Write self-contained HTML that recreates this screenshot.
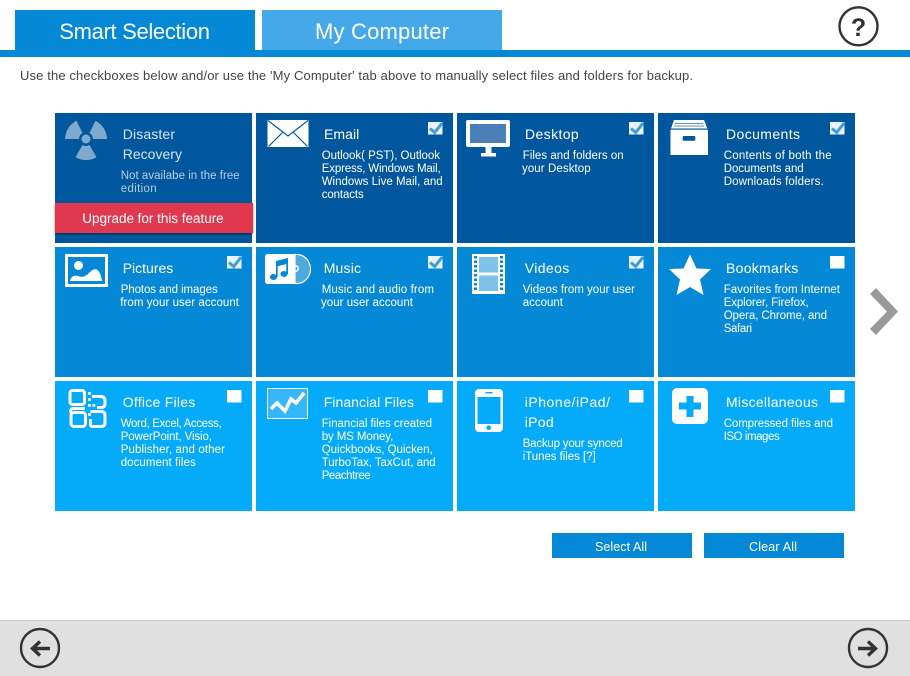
<!DOCTYPE html>
<html><head><meta charset="utf-8"><title>Smart Selection</title>
<style>
html,body{margin:0;padding:0;background:#fff;width:910px;height:676px;overflow:hidden}
svg{display:block}
text{font-family:"Liberation Sans",sans-serif;fill:#fff}
.t{font-size:14px}
.d{font-size:11.5px}
.b{font-size:12.5px}
</style></head><body>
<svg xmlns="http://www.w3.org/2000/svg" width="910" height="676" viewBox="0 0 910 676">
<defs>
<filter id="sh" x="-5%" y="-20%" width="110%" height="140%"><feDropShadow dx="0" dy="1" stdDeviation="1" flood-color="#000" flood-opacity=".55"/></filter>
<g id="box"><rect width="14.5" height="12.5" fill="#fff"/></g>
<g id="chk"><rect width="14.5" height="12.5" fill="#eaf2f8"/><path d="M2 6.5L6.7 10.5L14.2 1" fill="none" stroke="#3a9fd8" stroke-width="3"/></g>
</defs>
<!-- tabs -->
<rect x="15" y="10" width="240" height="40" fill="#0589d6"/>
<rect x="262" y="10" width="240" height="40" fill="#45a9e9"/>
<rect x="0" y="50" width="910" height="7" fill="#0589d6"/>
<text x="59.3" y="39" font-size="22" textLength="150.7">Smart Selection</text>
<text x="315" y="39" font-size="22" textLength="134">My Computer</text>
<circle cx="858.5" cy="26.3" r="19" fill="none" stroke="#333" stroke-width="2.4"/>
<text x="858.5" y="36" font-size="25" font-weight="bold" text-anchor="middle" style="fill:#333">?</text>
<text x="20" y="80" font-size="13" textLength="673" style="fill:#444">Use the checkboxes below and/or use the 'My Computer' tab above to manually select files and folders for backup.</text>

<!-- tiles -->
<g fill="#00579d"><rect x="55" y="113" width="197" height="130"/><rect x="256" y="113" width="197" height="130"/><rect x="457" y="113" width="197" height="130"/><rect x="658" y="113" width="197" height="130"/></g>
<g fill="#0589d6"><rect x="55" y="247" width="197" height="130"/><rect x="256" y="247" width="197" height="130"/><rect x="457" y="247" width="197" height="130"/><rect x="658" y="247" width="197" height="130"/></g>
<g fill="#05aaf8"><rect x="55" y="381" width="197" height="130"/><rect x="256" y="381" width="197" height="130"/><rect x="457" y="381" width="197" height="130"/><rect x="658" y="381" width="197" height="130"/></g>

<!-- Disaster -->
<g transform="translate(86 139)" fill="#7fa9cd">
<circle r="4.5"/>
<path d="M-10.5 18.2A21 21 0 0 0 10.5 18.2L3.5 6.06A7 7 0 0 1-3.5 6.06Z"/>
<path d="M9.5-18.2A21 21 0 0 1 21 0L7 0A7 7 0 0 0 3.5-6.06Z"/>
<path d="M-21 0A21 21 0 0 1-9.5-18.2L-3.5-6.06A7 7 0 0 0-7 0Z"/>
</g>
<text x="122.7" y="139" class="t" textLength="52.3" style="fill:#d5e3ef">Disaster</text>
<text x="122.7" y="159" class="t" textLength="59.3" style="fill:#d5e3ef">Recovery</text>
<text x="120.7" y="179" class="d" textLength="119" style="fill:#b5cde3">Not availabe in the free</text>
<text x="120.7" y="192" class="d" textLength="36" style="fill:#b5cde3">edition</text>
<rect x="55" y="203" width="198" height="30" fill="#e0384f" filter="url(#sh)"/>
<text x="82.3" y="223" font-size="13.5" textLength="141.4">Upgrade for this feature</text>

<!-- Email -->
<rect x="267.5" y="120" width="41" height="27" fill="#fff"/>
<path d="M268 120.5L288 136L308 120.5M268.5 146.5L283 132M307.5 146.5L293 132" fill="none" stroke="#00579d" stroke-width="1.2"/>
<text x="324" y="139" class="t" textLength="35.3">Email</text>
<text x="321.7" y="159" class="d" textLength="118.3">Outlook( PST), Outlook</text>
<text x="321.7" y="172" class="d" textLength="119">Express, Windows Mail,</text>
<text x="321.7" y="185" class="d" textLength="121">Windows Live Mail, and</text>
<text x="321.7" y="198" class="d" textLength="42">contacts</text>
<use href="#chk" x="428" y="122"/>

<!-- Desktop -->
<rect x="466" y="120" width="44" height="27" rx="2" fill="#fff"/>
<rect x="470" y="124" width="36" height="19" fill="#4a80b6"/>
<path d="M485.5 147h6v6h-6zM481 153h15v3.500h-15z" fill="#fff"/>
<text x="525" y="139" class="t" textLength="53.7">Desktop</text>
<text x="522.7" y="159" class="d" textLength="101">Files and folders on</text>
<text x="522" y="172" class="d" textLength="68.7">your Desktop</text>
<use href="#chk" x="629" y="122"/>

<!-- Documents -->
<path d="M674 120H704L708 130V155H670.500V130Z" fill="#fff"/>
<path d="M675 123.500H703M674 126H704" stroke="#5f93bf" stroke-width="1" fill="none"/>
<rect x="670" y="128.500" width="38" height="1.200" fill="#00579d"/>
<rect x="682.700" y="136" width="12.600" height="4.700" rx="1" fill="#00579d"/>
<text x="726" y="139" class="t" textLength="74">Documents</text>
<text x="723.7" y="159" class="d" textLength="108">Contents of both the</text>
<text x="723.7" y="172" class="d" textLength="80">Documents and</text>
<text x="723.7" y="185" class="d" textLength="100">Downloads folders.</text>
<use href="#chk" x="830" y="122"/>

<!-- Pictures -->
<rect x="65" y="254" width="43" height="33" rx="1" fill="#fff"/>
<rect x="68" y="257" width="37" height="27" fill="#0589d6"/>
<circle cx="78.500" cy="265.500" r="4.500" fill="#fff"/>
<path d="M70 281C71 276 75 275 78 276C83 278 86 276 90 272C95 267 100 268 102 281Z" fill="#fff"/>
<text x="122.7" y="273" class="t" textLength="50.6">Pictures</text>
<text x="120.7" y="293" class="d" textLength="97">Photos and images</text>
<text x="120.3" y="306" class="d" textLength="118.7">from your user account</text>
<use href="#chk" x="227" y="256"/>

<!-- Music -->
<path d="M295 254.500H297C305 254.500 310.500 262 310.500 269C310.500 276 305 283.500 297 283.500H295Z" fill="#4fa9dd" stroke="#fff" stroke-width="1.200"/>
<path d="M295 254H268Q265 254 265 257V281Q265 284 268 284H295Z" fill="#fff"/>
<circle cx="295.500" cy="268.500" r="2.800" fill="none" stroke="#fff" stroke-width="1.400"/>
<g fill="#0589d6"><ellipse cx="273.500" cy="277" rx="3.600" ry="3"/><ellipse cx="284" cy="274" rx="3.600" ry="3"/><path d="M276 261L288 258V274H286.300V264L277.700 266.300V277H276Z"/></g>
<text x="323.7" y="273" class="t" textLength="37.3">Music</text>
<text x="321.7" y="293" class="d" textLength="112.3">Music and audio from</text>
<text x="321" y="306" class="d" textLength="92">your user account</text>
<use href="#chk" x="428" y="256"/>

<!-- Videos -->
<rect x="472" y="254" width="33" height="40" fill="#fff"/>
<rect x="479" y="257" width="19" height="15.500" fill="#7fc1e8"/>
<rect x="479" y="275.500" width="19" height="15.500" fill="#7fc1e8"/>
<g fill="#0589d6"><rect x="474" y="256" width="3" height="2.500"/><rect x="474" y="260.500" width="3" height="2.500"/><rect x="474" y="265" width="3" height="2.500"/><rect x="474" y="269.500" width="3" height="2.500"/><rect x="474" y="274" width="3" height="2.500"/><rect x="474" y="278.500" width="3" height="2.500"/><rect x="474" y="283" width="3" height="2.500"/><rect x="474" y="287.500" width="3" height="2.500"/>
<rect x="500" y="256" width="3" height="2.500"/><rect x="500" y="260.500" width="3" height="2.500"/><rect x="500" y="265" width="3" height="2.500"/><rect x="500" y="269.500" width="3" height="2.500"/><rect x="500" y="274" width="3" height="2.500"/><rect x="500" y="278.500" width="3" height="2.500"/><rect x="500" y="283" width="3" height="2.500"/><rect x="500" y="287.500" width="3" height="2.500"/></g>
<text x="524.7" y="273" class="t" textLength="44.6">Videos</text>
<text x="522.7" y="293" class="d" textLength="112.3">Videos from your user</text>
<text x="522.7" y="306" class="d" textLength="40.3">account</text>
<use href="#chk" x="629" y="256"/>

<!-- Bookmarks -->
<path d="M690 254.500L696.500 268.500L711 269L700 279.500L703.500 295L690 287L676.500 295L680 279.500L669 269L683.500 268.500Z" fill="#fff"/>
<text x="726" y="273" class="t" textLength="72.3">Bookmarks</text>
<text x="723.7" y="293" class="d" textLength="116.3">Favorites from Internet</text>
<text x="723.7" y="306" class="d" textLength="85">Explorer, Firefox,</text>
<text x="723.7" y="319" class="d" textLength="103.3">Opera, Chrome, and</text>
<text x="723.7" y="332" class="d" textLength="28.3">Safari</text>
<use href="#box" x="830" y="256"/>

<!-- Office -->
<g fill="none" stroke="#fff" stroke-width="3">
<rect x="70" y="390.500" width="14.500" height="14" rx="2.500"/>
<path d="M92 396.500H100.500Q105 396.500 105 401V403.500Q105 407.500 101 407.500H97"/>
<path d="M70.500 413V411.500Q70.500 408.500 73.500 408.500H85"/>
<rect x="71" y="412.500" width="14.500" height="14" rx="3"/>
<path d="M90.500 426.500H101Q105 426.500 105 422.500V415.500Q105 411.500 101 411.500H90.500"/>
<path d="M90.500 419V426.500"/>
</g>
<g fill="#fff"><rect x="88" y="392" width="2.800" height="2.800"/><rect x="88" y="398" width="2.800" height="2.800"/><rect x="88" y="404" width="2.800" height="2.800"/><rect x="92.500" y="404" width="2.800" height="2.800"/><rect x="88" y="413" width="2.800" height="2.800"/></g>
<text x="122.7" y="407" class="t" textLength="72.6">Office Files</text>
<text x="120.7" y="427" class="d" textLength="101">Word, Excel, Access,</text>
<text x="120.7" y="440" class="d" textLength="91.3">PowerPoint, Visio,</text>
<text x="120.7" y="453" class="d" textLength="104.3">Publisher, and other</text>
<text x="120.7" y="466" class="d" textLength="75">document files</text>
<use href="#box" x="227" y="390"/>

<!-- Financial -->
<rect x="267.500" y="388.500" width="40" height="30" fill="#36b7fa" stroke="#fff" stroke-width="1"/>
<path d="M271 409L277 403L285 411L291 399L296 403L304 393" fill="none" stroke="#fff" stroke-width="3.600"/>
<text x="323.7" y="407" class="t" textLength="90.3">Financial Files</text>
<text x="321.7" y="427" class="d" textLength="110.3">Financial files created</text>
<text x="321.7" y="440" class="d" textLength="71.6">by MS Money,</text>
<text x="321.7" y="453" class="d" textLength="111">Quickbooks, Quicken,</text>
<text x="321.7" y="466" class="d" textLength="114">TurboTax, TaxCut, and</text>
<text x="321.7" y="479" class="d" textLength="49">Peachtree</text>
<use href="#box" x="428" y="390"/>

<!-- iPhone -->
<rect x="475" y="389" width="28" height="43" rx="4" fill="#fff"/>
<rect x="477.500" y="397" width="23" height="27" fill="#05aaf8"/>
<rect x="485.500" y="392" width="7" height="1.500" fill="#05aaf8"/>
<circle cx="488.700" cy="427.700" r="2.300" fill="#05aaf8"/>
<text x="524.7" y="407" class="t" textLength="85.3">iPhone/iPad/</text>
<text x="524.7" y="427" class="t" textLength="29">iPod</text>
<text x="522.7" y="447" class="d" textLength="100">Backup your synced</text>
<text x="522.7" y="460" class="d" textLength="73">iTunes files [?]</text>
<use href="#box" x="629" y="390"/>

<!-- Misc -->
<rect x="672" y="388" width="36" height="36" rx="5" fill="#fff"/>
<path d="M686.500 396H693.500V402.500H701V409.500H693.500V417H686.500V409.500H679V402.500H686.500Z" fill="#05aaf8"/>
<text x="726" y="407" class="t" textLength="92">Miscellaneous</text>
<text x="723.7" y="427" class="d" textLength="109.3">Compressed files and</text>
<text x="723.7" y="440" class="d" textLength="56">ISO images</text>
<use href="#box" x="830" y="390"/>

<!-- chevron -->
<path d="M876 288L898 311.500L876 335L870 329L887 311.500L870 294Z" fill="#999"/>

<!-- buttons -->
<rect x="552" y="533" width="140" height="25" fill="#0589d6"/>
<rect x="704" y="533" width="140" height="25" fill="#0589d6"/>
<text x="595" y="551" class="b" textLength="52">Select All</text>
<text x="749" y="551" class="b" textLength="48">Clear All</text>

<!-- footer -->
<rect x="0" y="620" width="910" height="56" fill="#e0e0e0"/>
<rect x="0" y="620" width="910" height="1" fill="#ccc"/>
<circle cx="40" cy="648" r="19" fill="none" stroke="#333" stroke-width="2.400"/>
<path d="M50 648.500H33M40 641.500L32.500 648.500L40 655.500" fill="none" stroke="#333" stroke-width="3.400"/>
<circle cx="868" cy="648" r="19" fill="none" stroke="#333" stroke-width="2.400"/>
<path d="M858 648.500H875M868 641.500L875.500 648.500L868 655.500" fill="none" stroke="#333" stroke-width="3.400"/>
</svg>
</body></html>
